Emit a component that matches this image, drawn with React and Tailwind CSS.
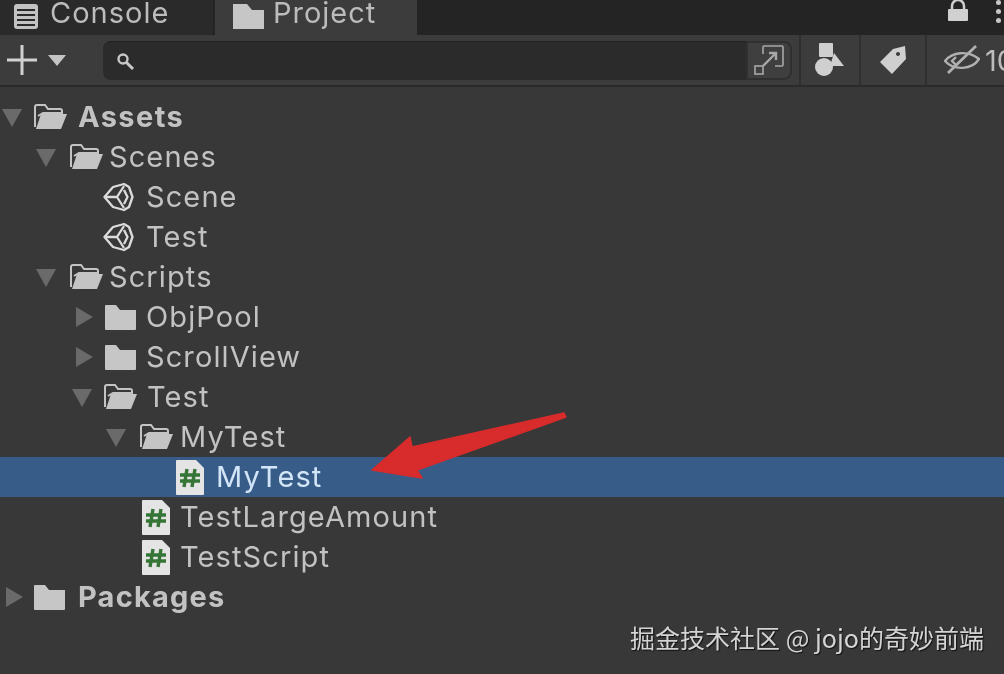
import React from "react";

const Tri = ({ open, className = "" }) => (
  <svg width="20" height="20" viewBox="0 0 20 20" className={className}>
    {open ? <path d="M0 2H20L10 20Z" fill="#6a6a6a" /> : <path d="M2 0L19 10L2 20Z" fill="#6a6a6a" />}
  </svg>
);

const FolderOpen = () => (
  <svg width="34" height="26" viewBox="0 0 34 26">
    <path d="M1 23V3a2 2 0 0 1 2-2h8l3 4h12a2 2 0 0 1 2 2v2H9L4 12" fill="none" stroke="#c4c4c4" strokeWidth="2" />
    <path d="M7 10H33L27 25H2Z" fill="#c4c4c4" />
  </svg>
);

const FolderClosed = () => (
  <svg width="31" height="26" viewBox="0 0 31 26">
    <path d="M0 2a1 1 0 0 1 1-1h10l4 5h16v19a1 1 0 0 1-1 1H1a1 1 0 0 1-1-1Z" fill="#c6c6c6" />
  </svg>
);

const UnityIcon = () => (
  <svg width="31" height="30" viewBox="0 0 31 30" fill="none" stroke="#dcdcdc" strokeWidth="2.3" strokeLinejoin="round">
    <path d="M1.5 15L10 5L21 2L26 5L29.5 15L26 25L21 28L10 25Z" />
    <path d="M1.5 15H14L21 4M14 15L21 26M21 8L24.5 15L21 22" />
  </svg>
);

const ScriptIcon = () => (
  <svg width="28" height="35" viewBox="0 0 28 35">
    <path d="M0 1a1 1 0 0 1 1-1h19l8 8v26a1 1 0 0 1-1 1H1a1 1 0 0 1-1-1Z" fill="#e4e4e4" />
    <path d="M11 9L8 27M19 9L16 27M4 15H24M4 21H24" stroke="#357535" strokeWidth="3.4" fill="none" />
  </svg>
);

const rows = [
  { pad: "pl-[2px]", arrow: "open", icon: "open", iconBox: "ml-[12px]", text: "Assets", textBox: "ml-[10px] font-bold tracking-[1.4px]" },
  { pad: "pl-[36px]", arrow: "open", icon: "open", iconBox: "ml-[14px]", text: "Scenes", textBox: "ml-[5px]" },
  { pad: "pl-[103px]", icon: "unity", text: "Scene", textBox: "ml-[12px]" },
  { pad: "pl-[103px]", icon: "unity", text: "Test", textBox: "ml-[12px]" },
  { pad: "pl-[36px]", arrow: "open", icon: "open", iconBox: "ml-[14px]", text: "Scripts", textBox: "ml-[5px]" },
  { pad: "pl-[74px]", arrow: "closed", icon: "closed", iconBox: "ml-[11px]", text: "ObjPool", textBox: "ml-[10px]" },
  { pad: "pl-[74px]", arrow: "closed", icon: "closed", iconBox: "ml-[11px]", text: "ScrollView", textBox: "ml-[10px]" },
  { pad: "pl-[72px]", arrow: "open", icon: "open", iconBox: "ml-[12px]", text: "Test", textBox: "ml-[9px]" },
  { pad: "pl-[106px]", arrow: "open", icon: "open", iconBox: "ml-[14px]", text: "MyTest", textBox: "ml-[6px]" },
  { pad: "pl-[176px]", icon: "script", text: "MyTest", textBox: "ml-[12px] text-[#d3e6f8]", sel: true },
  { pad: "pl-[142px]", icon: "script", text: "TestLargeAmount", textBox: "ml-[10px]" },
  { pad: "pl-[142px]", icon: "script", text: "TestScript", textBox: "ml-[10px]" },
  { pad: "pl-[4px]", arrow: "closed", icon: "closed", iconBox: "ml-[10px]", text: "Packages", textBox: "ml-[13px] font-bold tracking-[1.2px]" },
];

function Row({ r }) {
  return (
    <div className={`flex h-10 items-center ${r.pad} ${r.sel ? "bg-[#385c88]" : ""}`}>
      {r.arrow && <Tri open={r.arrow === "open"} />}
      <span className={`flex shrink-0 items-center ${r.iconBox || ""}`}>
        {r.icon === "open" && <FolderOpen />}
        {r.icon === "closed" && <FolderClosed />}
        {r.icon === "unity" && <UnityIcon />}
        {r.icon === "script" && <ScriptIcon />}
      </span>
      <span className={`text-[29px] leading-10 tracking-[1.1px] text-[#c2c2c2] ${r.textBox}`}>{r.text}</span>
    </div>
  );
}

export default function App() {
  return (
    <div className="relative h-[674px] w-[1004px] overflow-hidden bg-[#383838] blur-[0.5px] font-['Inter','Noto_Sans_CJK_SC',sans-serif]">
      {/* Tabs */}
      <div className="flex h-[35px] bg-[#242424]">
        <div className="flex w-[213px] items-center overflow-hidden rounded-br-sm bg-[#2a2a2a] pl-[14px]">
          <svg width="24" height="25" viewBox="0 0 24 25" className="-mt-[2px]">
            <rect width="24" height="25" rx="3" fill="#c2c2c2" />
            <path d="M3 6H21M3 11H21M3 16H21M3 21H21" stroke="#2a2a2a" strokeWidth="1.8" />
          </svg>
          <span className="-mt-[10px] ml-[12px] text-[29px] leading-none tracking-[1px] text-[#bcbcbc]">Console</span>
        </div>
        <div className="ml-[2px] flex w-[202px] items-center overflow-hidden bg-[#3c3c3c] pl-[18px]">
          <svg width="31" height="25" viewBox="0 0 31 25" className="-mt-[2px]">
            <path d="M0 0H14L19 6H31V25H0Z" fill="#c6c6c6" />
          </svg>
          <span className="-mt-[10px] ml-[9px] text-[29px] leading-none tracking-[1px] text-[#bcbcbc]">Project</span>
        </div>
        <div className="ml-auto flex items-start pr-[3px] pt-0">
          <svg width="22" height="22" viewBox="0 0 22 22" className="mr-[27px]">
            <path d="M5 9V6a6 6 0 0 1 12 0v3" fill="none" stroke="#d0d0d0" strokeWidth="2.5" />
            <rect x="1" y="9" width="20" height="12" rx="1" fill="#d0d0d0" />
          </svg>
          <span className="flex flex-col gap-[4px] pt-0">
            <span className="h-[5px] w-[5px] rounded-full bg-[#c8c8c8]" />
            <span className="h-[5px] w-[5px] rounded-full bg-[#c8c8c8]" />
            <span className="h-[5px] w-[5px] rounded-full bg-[#c8c8c8]" />
          </span>
        </div>
      </div>

      {/* Toolbar */}
      <div className="flex h-[52px] items-center border-b-2 border-[#2a2a2a] bg-[#3c3c3c]">
        <svg width="32" height="32" viewBox="0 0 32 32" className="ml-[6px] shrink-0">
          <path d="M16 1V31M1 16H31" stroke="#d2d2d2" strokeWidth="3" />
        </svg>
        <svg width="18" height="11" viewBox="0 0 18 11" className="ml-[10px] shrink-0">
          <path d="M0 0H18L9 11Z" fill="#c4c4c4" />
        </svg>
        <div className="ml-[37px] flex h-[39px] w-[643px] shrink-0 items-center rounded-l-lg border-t border-[#202020] bg-[#2b2b2b] pl-[12px]">
          <svg width="20" height="20" viewBox="0 0 20 20">
            <circle cx="8" cy="8" r="4.5" fill="none" stroke="#c8c8c8" strokeWidth="2.4" />
            <path d="M11.5 11.5L18 18" stroke="#c8c8c8" strokeWidth="3" />
          </svg>
        </div>
        <div className="flex h-[39px] w-[46px] shrink-0 items-center justify-center rounded-r-lg border-2 border-[#303030] bg-[#3f3f3f]">
          <svg width="32" height="32" viewBox="0 0 32 32" fill="none" stroke="#a8a8a8" strokeWidth="1.6">
            <path d="M10 10V3a1 1 0 0 1 1-1H29a1 1 0 0 1 1 1V21a1 1 0 0 1-1 1H22" />
            <rect x="2" y="22" width="8" height="8" />
            <path d="M10 22L23 9M16 9H23V16" strokeWidth="2.4" />
          </svg>
        </div>
        <div className="ml-[7px] flex h-full w-[62px] shrink-0 items-center justify-center border-x-2 border-[#2f2f2f]">
          <svg width="30" height="34" viewBox="0 0 30 34">
            <rect x="4" y="0" width="14" height="14" rx="1" fill="#cfcfcf" />
            <circle cx="9" cy="24" r="9" fill="#cfcfcf" />
            <path d="M19 10L29 23H15Z" fill="#cfcfcf" />
          </svg>
        </div>
        <div className="flex h-full w-[66px] shrink-0 items-center justify-center border-r-2 border-[#2f2f2f]">
          <svg width="26" height="28" viewBox="0 0 26 28">
            <path fillRule="evenodd" d="M0 16L13 3L25 0L26 13L12 28ZM18 6a2 2 0 1 0 .01 0Z" fill="#cfcfcf" />
          </svg>
        </div>
        <div className="flex h-full flex-1 items-center overflow-hidden pl-[17px]">
          <svg width="36" height="34" viewBox="0 0 36 34" fill="none" stroke="#b0b0b0" strokeWidth="2.4" className="shrink-0">
            <path d="M1 18C8 9 24 7 35 16C28 27 10 28 1 18Z" />
            <path d="M12 14L8 18L12 22" />
            <path d="M4 30L32 3" strokeWidth="2.8" />
          </svg>
          <span className="ml-[5px] text-[29px] leading-none text-[#bcbcbc]">10</span>
        </div>
      </div>

      {/* Tree */}
      <div className="pt-[10px]">
        {rows.map((r, i) => (
          <Row key={i} r={r} />
        ))}
      </div>

      {/* Red annotation arrow */}
      <svg width="204" height="72" viewBox="0 0 204 72" className="absolute left-[368px] top-[410px]">
        <path d="M4 60L42 27L44 37L196 3L198 7L49 60L54 68Z" fill="#d82b2b" stroke="#d82b2b" strokeWidth="1.5" strokeLinejoin="round" />
      </svg>

      {/* Watermark */}
      <div className="absolute right-[20px] top-[620px] font-['Noto_Sans_CJK_SC',sans-serif] text-[25px] leading-[34px] text-[#d4d4d4] [text-shadow:1px_1px_1px_#111]">
        掘金技术社区 @ jojo的奇妙前端
      </div>
    </div>
  );
}
